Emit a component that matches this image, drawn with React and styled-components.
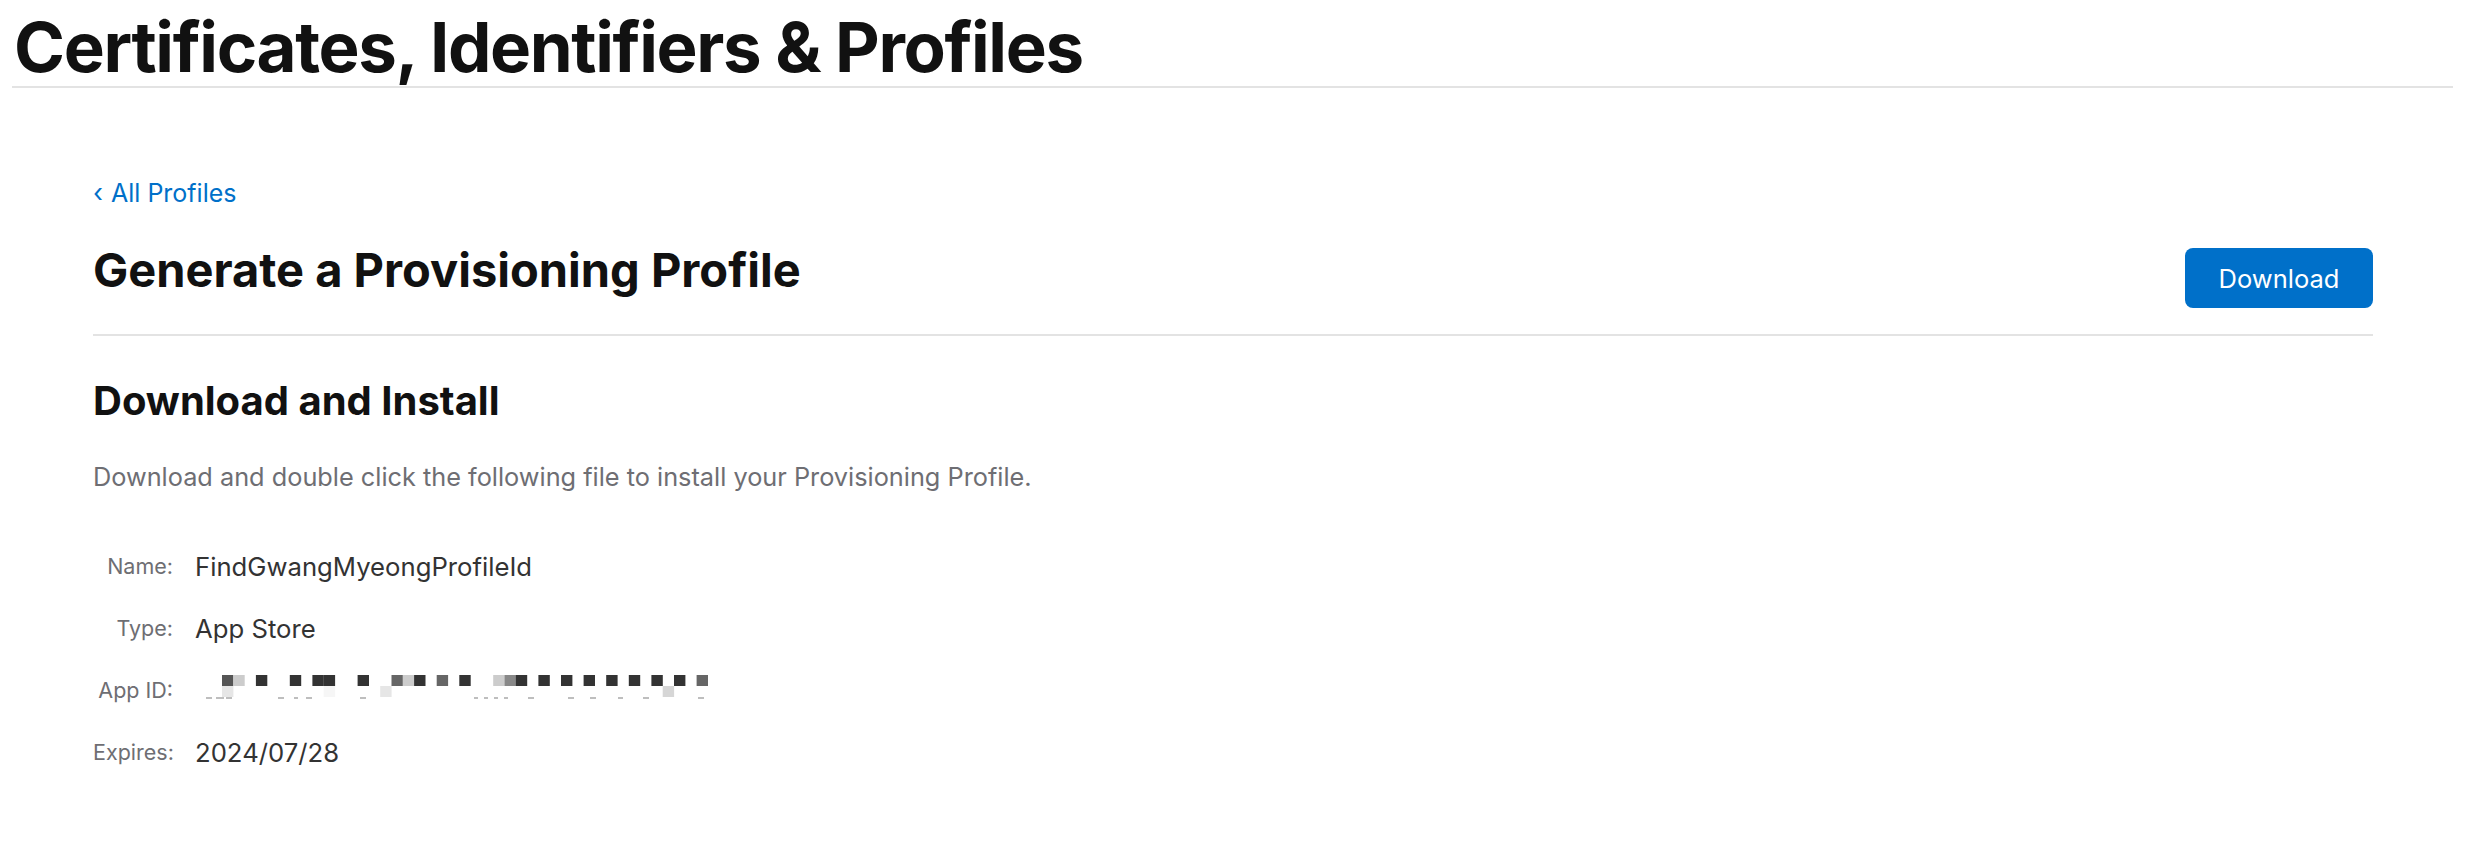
import React from "react";
import styled, { createGlobalStyle } from "styled-components";

const GlobalStyle = createGlobalStyle`
  html, body { margin: 0; padding: 0; background: #fff; }
  body { font-family: Inter, "Noto Sans", "Liberation Sans", sans-serif; color: #1d1d1f; }
`;

const Page = styled.div`
  width: 2482px;
  min-height: 868px;
  background: #fff;
`;

const Header = styled.header`
  margin: 0 29px 0 12px;
  padding-top: 8px;
  border-bottom: 2px solid #e3e3e3;
`;

const SiteTitle = styled.h1`
  margin: 0;
  padding-left: 2px;
  font-size: 69px;
  line-height: 78px;
  font-weight: 700;
  letter-spacing: -0.02em;
  color: #111;
`;

const Main = styled.main`
  padding: 0 109px 0 93px;
`;

const BackLink = styled.a`
  display: inline-flex;
  align-items: center;
  gap: 8px;
  margin-top: 89px;
  font-size: 25px;
  line-height: 32px;
  color: #0070c9;
  text-decoration: none;
`;

const Chevron = styled.span`
  font-size: 26px;
  line-height: 32px;
`;

const TitleRow = styled.div`
  display: flex;
  justify-content: space-between;
  align-items: flex-start;
  margin-top: 36px;
  padding-bottom: 26px;
  border-bottom: 2px solid #e3e3e3;
`;

const PageTitle = styled.h2`
  margin: 0;
  font-size: 47px;
  line-height: 50px;
  font-weight: 700;
  letter-spacing: 0;
  color: #111;
`;

const PrimaryButton = styled.button`
  margin-top: 3px;
  width: 188px;
  height: 60px;
  border: none;
  border-radius: 8px;
  background: #0070c9;
  color: #fff;
  font-family: inherit;
  font-size: 25.5px;
  font-weight: 400;
  cursor: pointer;
`;

const SectionTitle = styled.h3`
  margin: 44px 0 0;
  font-size: 40px;
  line-height: 42px;
  font-weight: 700;
  letter-spacing: 0;
  color: #111;
`;

const Description = styled.p`
  margin: 40px 0 0;
  font-size: 25.3px;
  line-height: 30px;
  color: #6e6e73;
`;

const DetailGrid = styled.dl`
  display: grid;
  grid-template-columns: 80px auto;
  grid-auto-rows: 62px;
  column-gap: 22px;
  align-items: center;
  margin: 43px 0 0;
  justify-content: start;
`;

const Label = styled.dt`
  text-align: right;
  font-size: 21.5px;
  color: #6e6e73;
`;

const Value = styled.dd`
  margin: 0;
  font-size: 25.7px;
  color: #333;
`;

const mosaicTop = [
  [0, "#555"], [1, "#ccc"], [3, "#333"], [6, "#333"], [8, "#333"], [9, "#333"],
  [12, "#333"], [15, "#666"], [16, "#ccc"], [17, "#333"], [19, "#666"], [21, "#333"],
  [24, "#ccc"], [25, "#888"], [26, "#333"], [28, "#333"], [30, "#333"], [32, "#333"],
  [34, "#333"], [36, "#333"], [38, "#333"], [40, "#333"], [42, "#666"],
];
const mosaicBottom = [[0, "#e6e6e6"], [9, "#f6f6f6"], [14, "#e6e6e6"], [39, "#d6d6d6"]];
const marks = [[-22, 6], [-12, 8], [-2, 6], [50, 6], [66, 4], [78, 6], [132, 6], [246, 4], [256, 4], [266, 4], [276, 4], [300, 6], [340, 6], [362, 6], [390, 5], [415, 6], [470, 6]];
const OFFSET = 27;

const MaskedId = () => (
  <svg width="520" height="28" viewBox="0 0 520 28" aria-label="redacted">
    {mosaicTop.map(([i, c]) => (
      <rect key={"t" + i} x={OFFSET + i * 11.3} y={2} width={11.4} height={11} fill={c} />
    ))}
    {mosaicBottom.map(([i, c]) => (
      <rect key={"b" + i} x={OFFSET + i * 11.3} y={13} width={11.4} height={11} fill={c} />
    ))}
    {marks.map(([x, w], k) => (
      <rect key={"m" + k} x={OFFSET + x + 6} y={24} width={w} height={2} fill="#888" opacity="0.55" />
    ))}
  </svg>
);

export default function App() {
  return (
    <Page>
      <GlobalStyle />
      <Header>
        <SiteTitle>Certificates, Identifiers &amp; Profiles</SiteTitle>
      </Header>
      <Main>
        <BackLink href="#">
          <Chevron>‹</Chevron>All Profiles
        </BackLink>
        <TitleRow>
          <PageTitle>Generate a Provisioning Profile</PageTitle>
          <PrimaryButton>Download</PrimaryButton>
        </TitleRow>
        <SectionTitle>Download and Install</SectionTitle>
        <Description>
          Download and double click the following file to install your Provisioning Profile.
        </Description>
        <DetailGrid>
          <Label>Name:</Label>
          <Value>FindGwangMyeongProfileId</Value>
          <Label>Type:</Label>
          <Value>App Store</Value>
          <Label>App ID:</Label>
          <Value><MaskedId /></Value>
          <Label>Expires:</Label>
          <Value>2024/07/28</Value>
        </DetailGrid>
      </Main>
    </Page>
  );
}
